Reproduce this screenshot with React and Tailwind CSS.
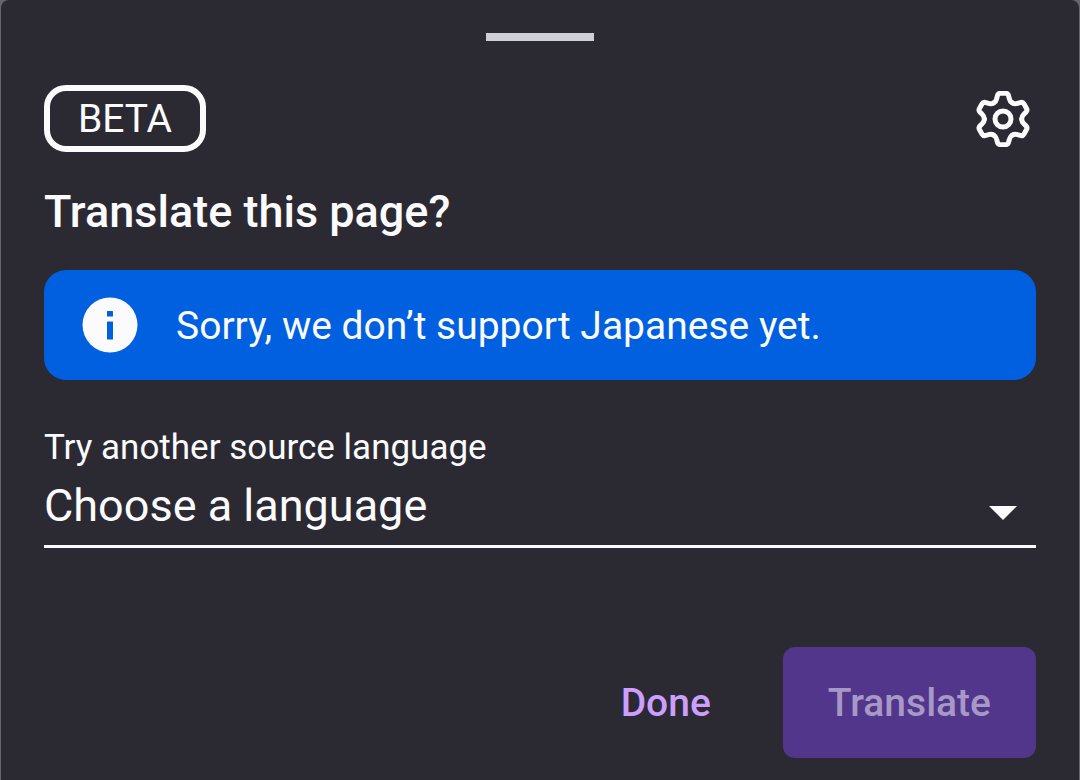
import { useState } from "react";

const TOOTH_ANGLES = [0, 60, 120, 180, 240, 300];

const languages = [
  "Bulgarian",
  "Dutch",
  "English",
  "French",
  "German",
  "Italian",
  "Polish",
  "Portuguese",
  "Spanish",
];

function GearIcon() {
  return (
    <svg
      aria-hidden="true"
      viewBox="-84 -84 168 168"
      className="size-14"
      fill="none"
      stroke="currentColor"
      strokeWidth="15"
      strokeLinecap="round"
      strokeLinejoin="round"
    >
      <circle r="24" />
      {TOOTH_ANGLES.map((angle) => (
        <path
          key={angle}
          transform={`rotate(${angle})`}
          d="M-28 -48.5C-23 -51.500 -20 -56 -19 -61L-17 -69Q-15 -77 -8 -77L8 -77Q15 -77 17 -69L19 -61C20 -56 23 -51.500 28 -48.5"
        />
      ))}
    </svg>
  );
}

function InfoIcon() {
  return (
    <svg aria-hidden="true" viewBox="0 0 56 56" className="size-14 shrink-0">
      <circle cx="28" cy="28" r="27.5" fill="#fbfbfe" />
      <rect x="25" y="14" width="6" height="5.500" rx="0.5" fill="#0060e0" />
      <rect x="25" y="24.500" width="6" height="18" rx="0.5" fill="#0060e0" />
    </svg>
  );
}

export default function App() {
  const [language, setLanguage] = useState("");

  return (
    <div className="min-h-screen bg-[#66656b] px-px font-['Roboto',sans-serif] text-[#fbfbfe]">
      <main className="flex min-h-screen flex-col rounded-t-lg bg-[#2b2a33] px-[43px] pb-[22px]">
        <div className="mt-[33px] h-2 w-[108px] self-center bg-[#cfcfd8]" />

        <header className="mt-11 flex items-center justify-between">
          <span className="rounded-[22px] border-6 border-[#fbfbfe] px-7 pt-[5px] pb-[3px] text-[39px] leading-[47px]">
            BETA
          </span>
          <button type="button" aria-label="Translation settings" className="mr-[5px]">
            <GearIcon />
          </button>
        </header>

        <h1 className="mt-8 text-[45px] leading-14 font-medium">Translate this page?</h1>

        <div role="status" className="mt-[30px] flex items-center gap-[38px] rounded-[22px] bg-[#0060e0] px-[38px] py-[27px]">
          <InfoIcon />
          <p className="pt-[2px] text-[39px] leading-[54px]">Sorry, we don’t support Japanese yet.</p>
        </div>

        <label htmlFor="source-language" className="mt-12 text-[35px] leading-10">
          Try another source language
        </label>
        <div className="relative">
          <select
            id="source-language"
            value={language}
            onChange={(e) => setLanguage(e.target.value)}
            className="h-20 w-full appearance-none border-b-3 border-[#fbfbfe] bg-transparent pr-20 pb-[2px] text-[45px] outline-none"
          >
            <option value="">Choose a language</option>
            {languages.map((name) => (
              <option key={name} value={name} className="bg-[#2b2a33]">
                {name}
              </option>
            ))}
          </select>
          <svg
            aria-hidden="true"
            viewBox="0 0 28 14"
            className="pointer-events-none absolute right-[19px] bottom-7 h-[14px] w-7"
          >
            <path d="M0 0H28L14 14Z" fill="#fbfbfe" />
          </svg>
        </div>

        <footer className="mt-auto flex items-center justify-end gap-6">
          <button type="button" className="h-[111px] px-12 pt-[2px] text-[39px] font-medium text-[#cb9eff]">
            Done
          </button>
          <button
            type="button"
            disabled={!language}
            className="h-[111px] rounded-xl bg-[#592acb] px-[45px] pt-[2px] text-[39px] font-medium disabled:bg-[#52368c] disabled:text-[#a798c6]"
          >
            Translate
          </button>
        </footer>
      </main>
    </div>
  );
}
